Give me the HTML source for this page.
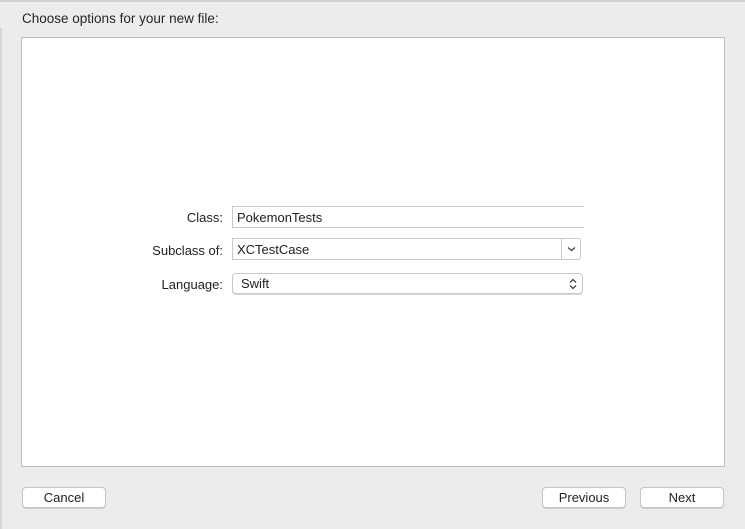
<!DOCTYPE html>
<html><head><meta charset="utf-8"><style>
*{box-sizing:border-box;margin:0;padding:0}
body{width:745px;height:529px;background:#ececec;font-family:"Liberation Sans",sans-serif;font-size:13px;color:#222;position:relative;overflow:hidden}
.top{position:absolute;left:0;top:0;width:745px;height:2px;background:#d0d0d0}
.left{position:absolute;left:0;top:28px;width:2px;height:501px;background:#d6d6d6}
.title{position:absolute;left:22px;top:11px;font-size:13.5px;color:#262626}
.panel{position:absolute;left:21px;top:37px;width:704px;height:430px;background:#fff;border:1px solid #bdbdbd}
.lbl{position:absolute;text-align:right;width:100px;left:123px;font-size:13px;color:#222}
.field{position:absolute;background:#fff;border:1px solid #c8c8c8;font-size:13px;padding-left:4px;line-height:21px}
.btn{position:absolute;top:487px;width:84px;height:21px;background:#fff;border:1px solid #c4c4c4;border-radius:4px;text-align:center;line-height:19px;font-size:13px;color:#222;box-shadow:0 1px 0 #d0d0d0}
</style></head><body>
<div class="top"></div><div class="left"></div>
<div class="title">Choose options for your new file:</div>
<div class="panel"></div>
<div class="lbl" style="top:210px">Class:</div>
<div class="field" style="left:232px;top:206px;width:352px;height:22px;border-right:none">PokemonTests</div>
<div class="lbl" style="top:243px">Subclass of:</div>
<div class="field" style="left:232px;top:238px;width:349px;height:22px;border-radius:0 3px 3px 0">XCTestCase
<div style="position:absolute;right:0;top:0;width:19px;height:20px;border-left:1px solid #c8c8c8"><svg width="19" height="20" viewBox="0 0 19 20"><path d="M6 8.5 L9.5 11.5 L13 8.5" fill="none" stroke="#444" stroke-width="1.3"/></svg></div></div>
<div class="lbl" style="top:277px">Language:</div>
<div class="field" style="left:232px;top:273px;width:351px;height:21px;border-radius:4px;padding-left:8px;line-height:20px;box-shadow:0 1px 0 #d8d8d8">Swift
<svg style="position:absolute;right:3px;top:2px" width="12" height="16" viewBox="0 0 12 16"><path d="M3 6.5 L6 3.5 L9 6.5 M3 9.5 L6 12.5 L9 9.5" fill="none" stroke="#444" stroke-width="1.3"/></svg></div>
<div class="btn" style="left:22px">Cancel</div>
<div class="btn" style="left:542px">Previous</div>
<div class="btn" style="left:640px">Next</div>
</body></html>
